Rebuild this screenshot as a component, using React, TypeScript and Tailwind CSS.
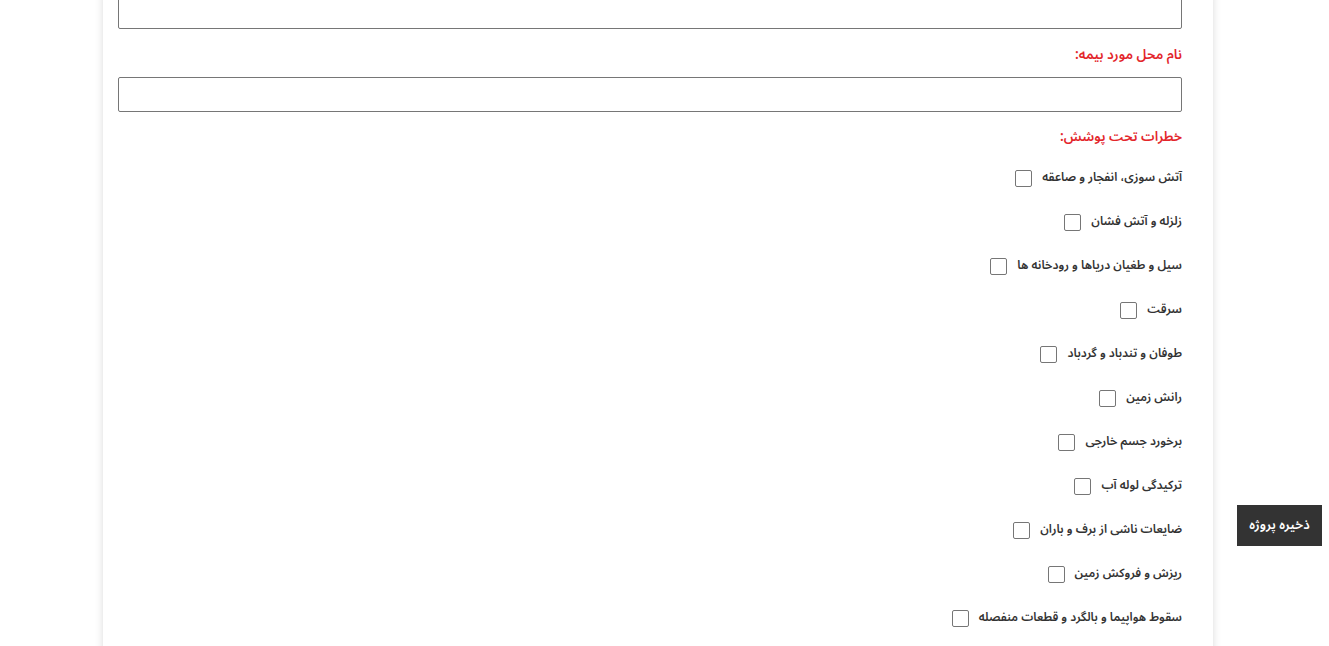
const risks = [
  "آتش سوزی، انفجار و صاعقه",
  "زلزله و آتش فشان",
  "سیل و طغیان دریاها و رودخانه ها",
  "سرقت",
  "طوفان و تندباد و گردباد",
  "رانش زمین",
  "برخورد جسم خارجی",
  "ترکیدگی لوله آب",
  "ضایعات ناشی از برف و باران",
  "ریزش و فروکش زمین",
  "سقوط هواپیما و بالگرد و قطعات منفصله",
];

export default function App() {
  return (
    <div
      dir="rtl"
      className="relative h-[646px] overflow-hidden bg-white"
      style={{ fontFamily: '"Noto Sans Arabic", "Noto Naskh Arabic", "DejaVu Sans", sans-serif' }}
    >
      <div className="mr-[116px] ml-[103px] w-[1110px] -mt-[6px] bg-white pr-[31px] pl-[15px] shadow-[0_0_8px_rgba(0,0,0,0.15)] h-[700px]">
        <input className="block h-[35px] w-full rounded-[2px] border border-[#767676]" />
        <div className="mt-[15px] text-[13.5px] font-semibold leading-[22px] text-[#e3262b]">نام محل مورد بیمه:</div>
        <input className="mt-[11px] block h-[35px] w-full rounded-[2px] border border-[#767676]" />
        <div className="mt-[14px] text-[13.5px] font-semibold leading-[22px] text-[#e3262b]">خطرات تحت پوشش:</div>
        <div className="mt-[8px] flex flex-col">
          {risks.map((r) => (
            <label key={r} className="flex h-[44px] items-center gap-[10px]">
              <span className="text-[12px] font-semibold text-[#333]">{r}</span>
              <span className="h-[17px] w-[17px] rounded-[2px] border border-[#767676] bg-white" />
            </label>
          ))}
        </div>
      </div>
      <button className="absolute right-[7px] top-[505px] flex h-[41px] w-[85px] items-center justify-center bg-[#333] pt-[1px] text-[13px] font-semibold text-white">
        ذخیره پروژه
      </button>
    </div>
  );
}
